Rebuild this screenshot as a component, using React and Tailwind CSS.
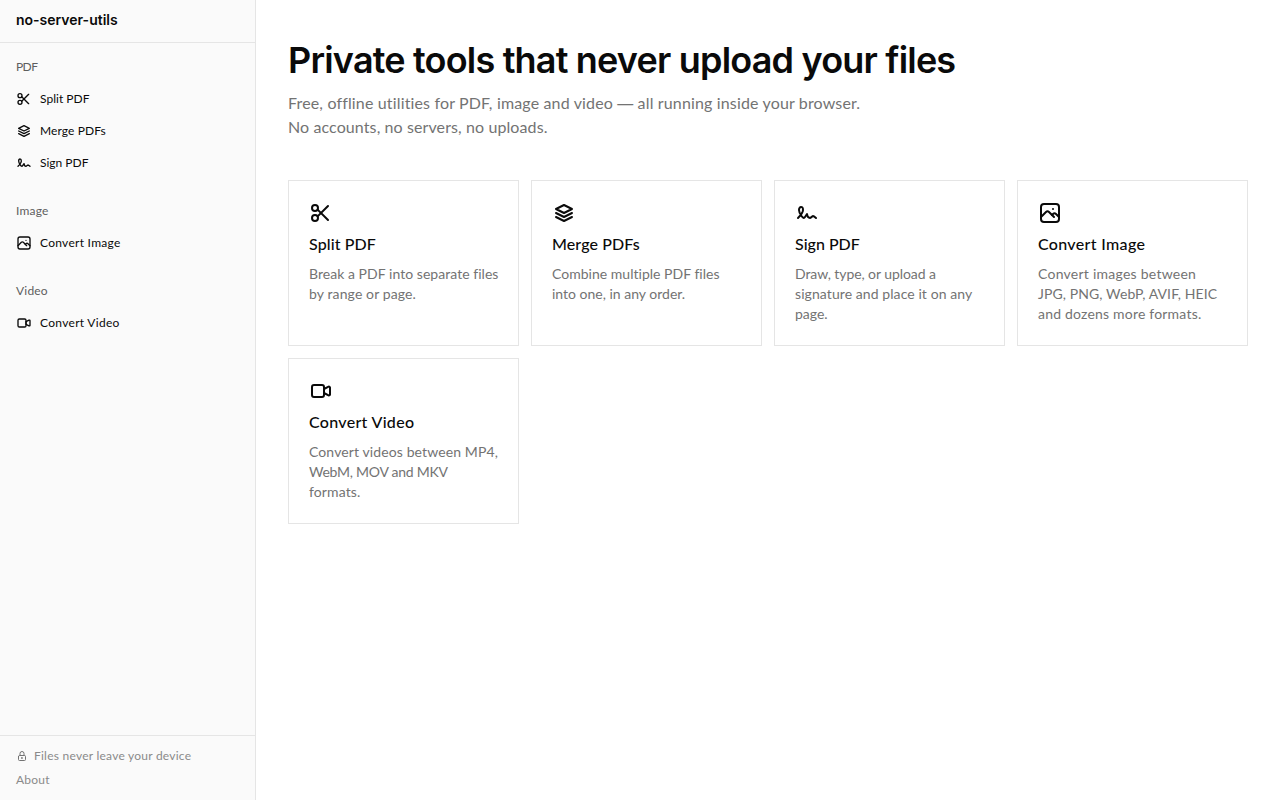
import { TbLock, TbPhoto, TbScissors, TbSignature, TbStack2, TbVideo } from 'react-icons/tb';

const groups = [
  {
    label: 'PDF',
    labelTracking: 'tracking-[-0.6px]',
    tools: [
      {
        name: 'Split PDF',
        icon: TbScissors,
        navTracking: 'tracking-[0.02px]',
        titleTracking: 'tracking-[0.1px]',
        lines: [
          { text: 'Break a PDF into separate files', tracking: 'tracking-[0.04px]' },
          { text: 'by range or page.', tracking: 'tracking-[0.12px]' }
        ]
      },
      {
        name: 'Merge PDFs',
        icon: TbStack2,
        navTracking: 'tracking-[0.1px]',
        titleTracking: 'tracking-[0.1px]',
        lines: [
          { text: 'Combine multiple PDF files', tracking: 'tracking-[0.02px]' },
          { text: 'into one, in any order.', tracking: 'tracking-normal' }
        ]
      },
      {
        name: 'Sign PDF',
        icon: TbSignature,
        navTracking: 'tracking-normal',
        titleTracking: 'tracking-normal',
        lines: [
          { text: 'Draw, type, or upload a', tracking: 'tracking-[-0.08px]' },
          { text: 'signature and place it on any', tracking: 'tracking-[0.08px]' },
          { text: 'page.', tracking: 'tracking-normal' }
        ]
      }
    ]
  },
  {
    label: 'Image',
    labelTracking: 'tracking-[0.2px]',
    tools: [
      {
        name: 'Convert Image',
        icon: TbPhoto,
        navTracking: 'tracking-[0.28px]',
        titleTracking: 'tracking-[0.33px]',
        lines: [
          { text: 'Convert images between', tracking: 'tracking-[0.25px]' },
          { text: 'JPG, PNG, WebP, AVIF, HEIC', tracking: 'tracking-[0.09px]' },
          { text: 'and dozens more formats.', tracking: 'tracking-[0.2px]' }
        ]
      }
    ]
  },
  {
    label: 'Video',
    labelTracking: 'tracking-[0.2px]',
    tools: [
      {
        name: 'Convert Video',
        icon: TbVideo,
        navTracking: 'tracking-[0.3px]',
        titleTracking: 'tracking-[0.3px]',
        lines: [
          { text: 'Convert videos between MP4,', tracking: 'tracking-[0.11px]' },
          { text: 'WebM, MOV and MKV', tracking: 'tracking-[-0.24px]' },
          { text: 'formats.', tracking: 'tracking-[0.12px]' }
        ]
      }
    ]
  }
];

const tools = groups.flatMap((g) => g.tools);

function Sidebar() {
  return (
    <aside className="flex w-64 shrink-0 flex-col border-r border-[#e5e5e5] bg-[#fafafa]">
      <div className="flex h-[43px] items-center border-b border-[#e5e5e5] px-4 pb-0.5">
        <a href="#" className="font-['Inter',sans-serif] text-sm font-semibold">
          no-server-utils
        </a>
      </div>

      <nav className="flex flex-1 flex-col gap-4 pt-2">
        {groups.map((group) => (
          <div key={group.label}>
            <div className={`flex h-8 items-center px-4 text-xs text-[#5e5e5e] ${group.labelTracking}`}>
              {group.label}
            </div>
            {group.tools.map(({ name, icon: Icon, navTracking }) => (
              <a key={name} href="#" className="flex h-8 items-center gap-2 px-4 text-xs">
                <Icon className="size-4" />
                <span className={navTracking}>{name}</span>
              </a>
            ))}
          </div>
        ))}
      </nav>

      <div className="flex flex-col gap-2 border-t border-[#e5e5e5] px-4 py-3 text-xs tracking-[0.24px] text-[#8a8a8a]">
        <div className="flex items-center gap-1.5">
          <TbLock className="size-3 text-[#737373]" />
          <span>Files never leave your device</span>
        </div>
        <a href="#">About</a>
      </div>
    </aside>
  );
}

function ToolCard({ tool }) {
  const Icon = tool.icon;

  return (
    <a href="#" className="flex h-[166px] flex-col border border-[#e5e5e5] bg-white p-5">
      <Icon className="size-6" />
      <h2 className={`mt-[7px] text-base/6 font-medium ${tool.titleTracking}`}>{tool.name}</h2>
      <p className="mt-2 text-sm/5 whitespace-nowrap text-[#737373]">
        {tool.lines.map(({ text, tracking }) => (
          <span key={text} className={`block ${tracking}`}>
            {text}
          </span>
        ))}
      </p>
    </a>
  );
}

export default function App() {
  return (
    <div className="flex h-screen overflow-hidden bg-white font-['Lato',sans-serif] text-[#0a0a0a]">
      <Sidebar />

      <main className="flex-1 px-8 py-10">
        <h1 className="font-['Inter',sans-serif] text-4xl/10 font-semibold tracking-[-0.81px]">
          Private tools that never upload your files
        </h1>
        <p className="mt-[11px] text-base/6 text-[#737373]">
          <span className="block tracking-[0.15px]">
            Free, offline utilities for PDF, image and video{' '}
            <span className="font-['Liberation_Sans',sans-serif] leading-none">—</span> all running inside your browser.
          </span>
          <span className="block tracking-[0.1px]">No accounts, no servers, no uploads.</span>
        </p>

        <div className="mt-[41px] grid grid-cols-4 gap-3">
          {tools.map((tool) => (
            <ToolCard key={tool.name} tool={tool} />
          ))}
        </div>
      </main>
    </div>
  );
}
